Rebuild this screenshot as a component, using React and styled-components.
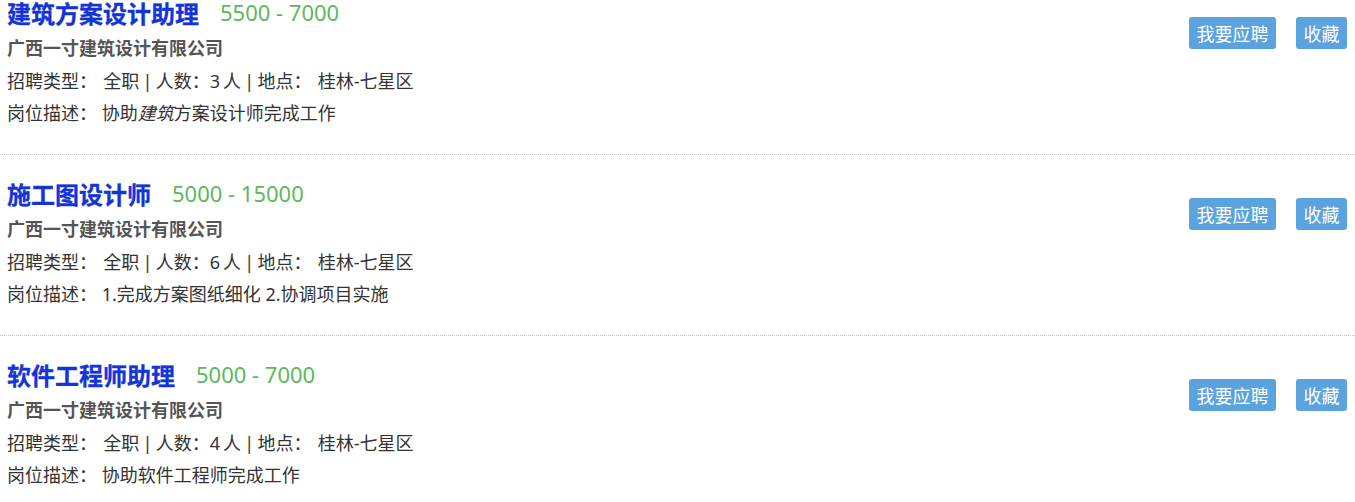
import styled, { createGlobalStyle } from 'styled-components';

const GlobalStyle = createGlobalStyle`
  html, body {
    margin: 0;
    padding: 0;
    background: #fff;
  }
  body {
    font-family: 'Noto Sans', 'Noto Sans CJK SC', sans-serif;
    overflow: hidden;
  }
`;

const JobList = styled.ul`
  list-style: none;
  margin: -26px 0 0;
  padding: 0;
`;

const JobItem = styled.li`
  display: flex;
  justify-content: space-between;
  align-items: flex-start;
  padding: 22px 8px 25px 7px;
  border-bottom: 1px dotted #c8c8c8;
`;

const JobInfo = styled.div`
  display: flex;
  flex-direction: column;
`;

const TitleRow = styled.div`
  display: flex;
  align-items: center;
  height: 32px;
  margin-bottom: 3px;
`;

const JobTitle = styled.a`
  font-family: 'Noto Sans CJK SC', sans-serif;
  font-size: 24px;
  font-weight: 700;
  color: #1334d6;
  text-decoration: none;
  -webkit-text-stroke: 0.3px #1334d6;
`;

const Salary = styled.span`
  margin-left: 21px;
  font-size: 22px;
  color: #5cb85c;
`;

const Company = styled.div`
  font-family: 'Noto Sans CJK SC', sans-serif;
  font-size: 18px;
  font-weight: 700;
  line-height: 32px;
  margin-bottom: 2px;
  color: #555;
`;

const Line = styled.div`
  font-size: 18px;
  line-height: 32px;
  color: #333;
  white-space: pre;
  word-spacing: ${({ $tight }) => ($tight ? '-1.5px' : '0')};

  em {
    font-style: italic;
  }
`;

const Actions = styled.div`
  display: flex;
  gap: 20px;
  margin-top: 21px;
`;

const ActionButton = styled.button`
  height: 32px;
  padding: 0 7.5px;
  border: 0;
  border-radius: 3px;
  background-color: #5aa3df;
  color: #fff;
  font-family: 'Noto Sans CJK SC', sans-serif;
  font-size: 18px;
  cursor: pointer;
`;

const jobs = [
  {
    title: '建筑方案设计助理',
    salary: '5500 - 7000',
    count: 3,
    desc: (
      <>
        协助<em>建筑</em>方案设计师完成工作
      </>
    ),
  },
  {
    title: '施工图设计师',
    salary: '5000 - 15000',
    count: 6,
    desc: '1.完成方案图纸细化 2.协调项目实施',
  },
  {
    title: '软件工程师助理',
    salary: '5000 - 7000',
    count: 4,
    desc: '协助软件工程师完成工作',
  },
];

const App = () => (
  <>
    <GlobalStyle />
    <JobList>
      {jobs.map((job) => (
        <JobItem key={job.title}>
          <JobInfo>
            <TitleRow>
              <JobTitle href="#">{job.title}</JobTitle>
              <Salary>{job.salary}</Salary>
            </TitleRow>
            <Company>广西一寸建筑设计有限公司</Company>
            <Line $tight>{`招聘类型：  全职 | 人数：${job.count} 人 | 地点：  桂林-七星区`}</Line>
            <Line>
              {'岗位描述： '}
              {job.desc}
            </Line>
          </JobInfo>
          <Actions>
            <ActionButton>我要应聘</ActionButton>
            <ActionButton>收藏</ActionButton>
          </Actions>
        </JobItem>
      ))}
    </JobList>
  </>
);

export default App;
